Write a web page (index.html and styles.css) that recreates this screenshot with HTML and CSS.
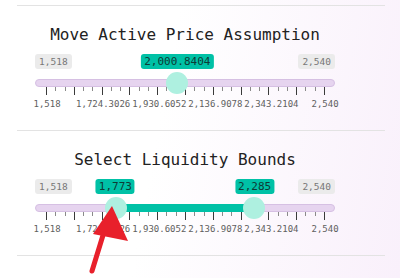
FILE: index.html
```html
<!DOCTYPE html>
<html lang="en">
<head>
    <meta charset="UTF-8">
    <meta name="viewport" content="width=device-width, initial-scale=1.0">
    <title>Liquidity Range</title>
    <link rel="stylesheet" href="styles.css">
</head>
<body>
    <div class="container">
        <div class="section">
            <h2>Move Active Price Assumption</h2>
            <div class="slider">
                <div class="labels">
                    <span class="bound">1,518</span>
                    <span class="bound">2,540</span>
                    <div class="axis">
                        <span class="value" style="left: 47.24%">2,000.8404</span>
                    </div>
                </div>
                <div class="track">
                    <div class="axis">
                        <span class="thumb" style="left: 47.24%"></span>
                    </div>
                </div>
                <div class="ticks">
                    <i class="major"></i><i></i><i></i><i class="major"></i><i></i><i></i>
                    <i class="major"></i><i></i><i></i><i class="major"></i><i></i><i></i>
                    <i class="major"></i><i></i><i></i><i class="major"></i><i></i><i></i>
                    <i class="major"></i><i></i><i></i><i class="major"></i><i></i><i></i>
                    <i class="major"></i><i></i><i></i><i class="major"></i><i></i><i></i>
                    <i class="major"></i>
                </div>
                <div class="tick-labels">
                    <span>1,518</span>
                    <span>1,724.3026</span>
                    <span>1,930.6052</span>
                    <span>2,136.9078</span>
                    <span>2,343.2104</span>
                    <span class="last">2,540</span>
                </div>
            </div>
        </div>

        <div class="section">
            <h2>Select Liquidity Bounds</h2>
            <div class="slider">
                <div class="labels">
                    <span class="bound">1,518</span>
                    <span class="bound">2,540</span>
                    <div class="axis">
                        <span class="value" style="left: 24.95%">1,773</span>
                        <span class="value" style="left: 75.05%">2,285</span>
                    </div>
                </div>
                <div class="track">
                    <div class="axis">
                        <span class="range" style="left: 24.95%; width: 50.1%"></span>
                        <span class="thumb" style="left: 24.95%"></span>
                        <span class="thumb" style="left: 75.05%"></span>
                    </div>
                </div>
                <div class="ticks">
                    <i class="major"></i><i></i><i></i><i class="major"></i><i></i><i></i>
                    <i class="major"></i><i></i><i></i><i class="major"></i><i></i><i></i>
                    <i class="major"></i><i></i><i></i><i class="major"></i><i></i><i></i>
                    <i class="major"></i><i></i><i></i><i class="major"></i><i></i><i></i>
                    <i class="major"></i><i></i><i></i><i class="major"></i><i></i><i></i>
                    <i class="major"></i>
                </div>
                <div class="tick-labels">
                    <span>1,518</span>
                    <span>1,724.3026</span>
                    <span>1,930.6052</span>
                    <span>2,136.9078</span>
                    <span>2,343.2104</span>
                    <span class="last">2,540</span>
                </div>
            </div>
        </div>
        <div class="section-end"></div>
    </div>

    <svg class="arrow" width="50" height="80" viewBox="85 200 50 80">
        <line x1="92" y1="271" x2="104" y2="232" stroke="#e8202b" stroke-width="5" stroke-linecap="round"/>
        <polygon points="112,206 93,234 128,241" fill="#e8202b"/>
    </svg>
</body>
</html>
```

FILE: styles.css
```css
* {
    margin: 0;
    padding: 0;
    box-sizing: border-box;
}

body {
    font-family: "DejaVu Sans Mono", "Liberation Mono", monospace;
    background: linear-gradient(100deg, #ffffff 40%, #f9f0fb 100%);
    width: 400px;
    height: 278px;
    overflow: hidden;
    padding-top: 5px;
    position: relative;
}

.container {
    margin-left: 17px;
    width: 368px;
}

.section {
    border-top: 1px solid #e3e3e3;
    height: 125px;
    padding-top: 19px;
}

.section-end {
    border-top: 1px solid #e3e3e3;
}

.section h2 {
    width: 300px;
    margin-left: 18px;
    text-align: center;
    font-size: 16px;
    font-weight: normal;
    line-height: 20px;
    color: #222;
}

.slider {
    width: 300px;
    margin-left: 18px;
}

.labels {
    position: relative;
    display: flex;
    justify-content: space-between;
    height: 15px;
    margin-top: 9px;
}

.axis {
    position: absolute;
    top: 0;
    bottom: 0;
    left: 11px;
    right: 11px;
}

.bound {
    background: #ebebeb;
    color: #777;
    font-size: 9.5px;
    line-height: 15px;
    padding: 0 4px;
    border-radius: 3px;
}

.value {
    position: absolute;
    top: 0;
    transform: translateX(-50%);
    background: #00c1a6;
    color: #0e3a35;
    font-size: 11px;
    line-height: 15px;
    padding: 0 3px;
    border-radius: 3px;
    white-space: nowrap;
}

.track {
    position: relative;
    height: 8px;
    margin-top: 10px;
    background: #e6d4ef;
    border: 1px solid #d6c0e3;
    border-radius: 4px;
}

.range {
    position: absolute;
    top: -1px;
    height: 8px;
    background: #00c1a6;
}

.thumb {
    position: absolute;
    top: -8px;
    width: 22px;
    height: 22px;
    border-radius: 50%;
    background: #aef0e0;
    transform: translateX(-50%);
}

.ticks {
    display: flex;
    justify-content: space-between;
    align-items: flex-start;
    height: 8px;
    padding: 0 10px 0 11px;
}

.ticks i {
    width: 1px;
    height: 4px;
    background: #8a8a8a;
}

.ticks i.major {
    height: 8px;
    background: #3a3a3a;
}

.tick-labels {
    display: flex;
    margin-top: 4px;
    margin-left: -16px;
    font-size: 9px;
    line-height: 11px;
    color: #606060;
}

.tick-labels span {
    width: 56.1px;
    flex-shrink: 0;
    text-align: center;
    white-space: nowrap;
}

.tick-labels span.last {
    margin-left: -2.5px;
}

.arrow {
    position: absolute;
    left: 85px;
    top: 200px;
}
```
